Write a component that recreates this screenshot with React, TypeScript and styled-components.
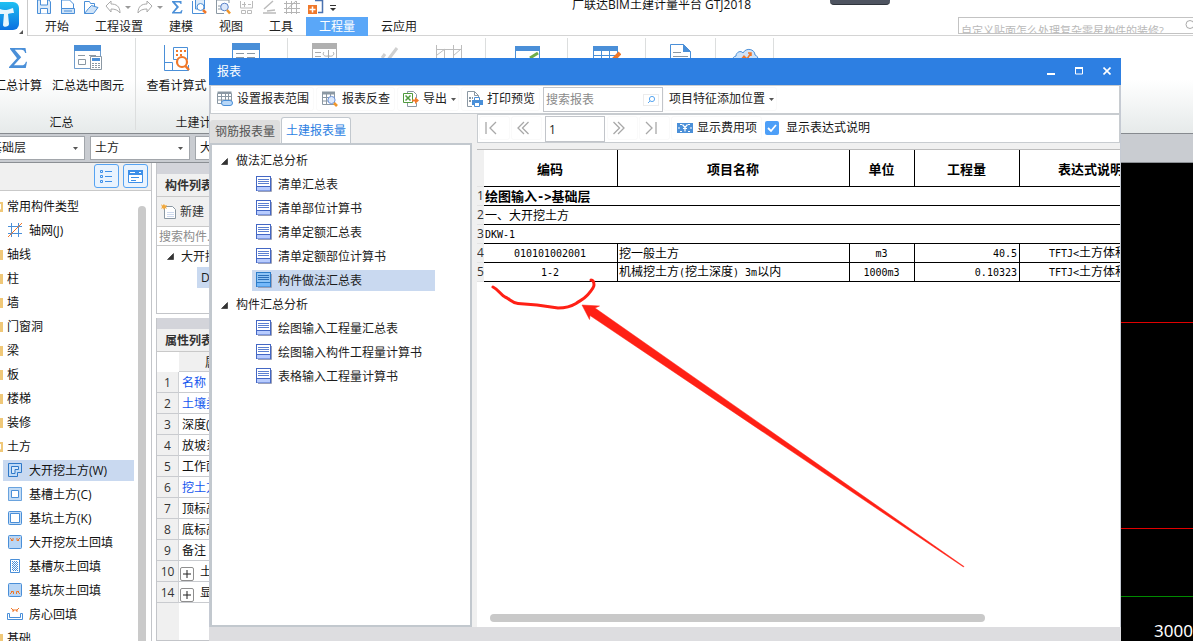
import React from "react";
import styled, { createGlobalStyle, css } from "styled-components";

const Global = createGlobalStyle`
  *, *::before, *::after { box-sizing: border-box; }
  html, body { margin: 0; height: 100%; background: #fff; overflow: hidden; }
  body, button, input, select {
    font-family: "Open Sans", "Noto Sans CJK SC", sans-serif;
    font-size: 12px;
    line-height: 16px;
    color: #1c1c1c;
  }
  button { border: 0; padding: 0; background: none; white-space: nowrap; }
  ul { list-style: none; margin: 0; padding: 0; }
  #root { height: 100%; }
`;

const Page = styled.div`
  position: relative;
  display: flex;
  flex-direction: column;
  height: 100vh;
  overflow: hidden;
`;

/* ---------- application header ---------- */

const Header = styled.header`
  display: flex;
  height: 36px;
  flex: none;
`;
const LogoCell = styled.div`
  width: 28px;
  flex: none;
  border-right: 1px solid #c9c9c9;
`;
const HeaderMain = styled.div`
  flex: 1;
  min-width: 0;
  display: flex;
  flex-direction: column;
  border-bottom: 1px solid #d4d4d4;
`;
const QuickBar = styled.div`
  display: flex;
  align-items: flex-start;
  height: 17px;
  padding-left: 8px;
  overflow: hidden;
`;
const QuickButton = styled.button<{ $w?: number }>`
  display: block;
  flex: none;
  width: ${(p) => p.$w ?? 23}px;
  height: 17px;
  svg { display: block; margin-top: -4px; }
`;
const AppTitle = styled.div`
  margin-left: 234px;
  margin-top: -4px;
  line-height: 18px;
  white-space: nowrap;
  color: #111;
`;
const Recorder = styled.div`
  width: 60px;
  height: 5px;
  margin-left: 79px;
  flex: none;
  border-radius: 0 0 4px 4px;
  background: #4e5460;
  border-bottom: 1px solid #2f343c;
`;
const MenuRow = styled.div`
  display: flex;
  justify-content: space-between;
  height: 18px;
`;
const Tabs = styled.nav`
  display: flex;
  padding-left: 4px;
`;
const MenuTab = styled.button<{ $active?: boolean }>`
  height: 19px;
  padding: 0 13px;
  color: ${(p) => (p.$active ? "#fff" : "#222")};
  background: ${(p) => (p.$active ? "#5aa7f8" : "transparent")};
`;
const HelpSearch = styled.label`
  display: flex;
  width: 235px;
  height: 17px;
  border: 1px solid #c3c3c3;
  border-right: 0;
  overflow: hidden;
  svg { flex: none; margin-top: 2px; }
  input {
    flex: 1;
    min-width: 0;
    height: 24px;
    border: 0;
    padding: 1px 0 0 2px;
    font-size: 11px;
    background: none;
    outline: none;
  }
  input::placeholder { color: #b9b9b9; opacity: 1; }
`;

/* ---------- ribbon ---------- */

const Ribbon = styled.div`
  display: flex;
  flex: none;
  height: 98px;
  padding-top: 2px;
  margin-left: -12px;
  border-bottom: 1px solid #868a8f;
  background: linear-gradient(#fff 45%, #e6eaea);
`;
const Group = styled.section<{ $w: number }>`
  display: flex;
  flex-direction: column;
  flex: none;
  width: ${(p) => p.$w}px;
  height: 92px;
  border-right: 1px solid #dcdede;
`;
const GroupButtons = styled.div<{ $start?: boolean }>`
  display: flex;
  justify-content: ${(p) => (p.$start ? "flex-start" : "center")};
  flex: 1;
`;
const RibbonButton = styled.button<{ $w: number }>`
  display: flex;
  flex-direction: column;
  align-items: center;
  width: ${(p) => p.$w}px;
  padding-top: 5px;
  gap: 7px;
  color: #111;
`;
const GroupCaption = styled.div`
  height: 15px;
  text-align: center;
`;

/* ---------- floor / type selectors ---------- */

const SelectBar = styled.div`
  display: flex;
  align-items: center;
  gap: 5px;
  flex: none;
  height: 29px;
  margin-left: -16px;
  padding-left: 1px;
  background: #c9ccd1;
  border-bottom: 1px solid #8b8f94;
`;
const SelectBox = styled.div`
  position: relative;
  width: 100px;
  height: 24px;
  select {
    appearance: none;
    width: 100%;
    height: 100%;
    padding: 0 4px;
    border: 1px solid #a2a6ab;
    border-radius: 0;
    background: #fff;
  }
  svg { position: absolute; right: 7px; top: 11px; }
`;

/* ---------- workspace ---------- */

const Workspace = styled.main`
  display: flex;
  flex: 1;
  min-height: 0;
`;
const Palette = styled.aside`
  display: flex;
  flex-direction: column;
  flex: none;
  width: 152px;
  border-right: 1px solid #c3c5c9;
  overflow: hidden;
`;
const PaletteTools = styled.div`
  display: flex;
  justify-content: flex-end;
  gap: 4px;
  flex: none;
  height: 28px;
  padding: 1px 3px 0 0;
  background: #f0f0f0;
  border-bottom: 1px solid #c9c9c9;
`;
const PaletteTool = styled.button`
  display: grid;
  place-items: center;
  width: 25px;
  height: 24px;
  border: 1px solid #56a3f2;
  border-radius: 3px;
  background: #e9f3fe;
`;
const PaletteBody = styled.div`
  display: flex;
  justify-content: space-between;
  flex: 1;
  min-height: 0;
  padding: 3px 5px 0 0;
`;
const PaletteTree = styled.ul`
  width: 146px;
  margin-left: -12px;
`;
const PaletteRow = styled.li`
  height: 24px;
  padding-top: 2px;
`;
const PaletteItem = styled.button<{ $child?: boolean; $on?: boolean }>`
  display: flex;
  align-items: flex-start;
  height: 21px;
  padding-top: 2px;
  line-height: 18px;
  gap: ${(p) => (p.$child ? 6 : 4)}px;
  ${(p) =>
    p.$child &&
    css`
      width: 131px;
      margin-left: 15px;
      padding-left: 4px;
    `}
  background: ${(p) => (p.$on ? "#c9d9f0" : "transparent")};
  color: #111;
`;
const VThumb = styled.div`
  width: 8px;
  margin-top: 12px;
  border-radius: 4px 4px 0 0;
  background: #cacaca;
`;
const Docks = styled.div`
  display: flex;
  flex-direction: column;
  gap: 4px;
  flex: none;
  width: 260px;
  margin-left: 4px;
`;
const Dock = styled.section<{ $h?: number }>`
  display: flex;
  flex-direction: column;
  ${(p) => (p.$h ? `height: ${p.$h}px;` : "flex: 1;")}
  border: 1px solid #c3c5c9;
  border-top: 0;
`;
const DockGrip = styled.div`
  height: 11px;
  flex: none;
  background: #d3d4da;
`;
const DockTitle = styled.h2`
  margin: 0;
  height: 23px;
  flex: none;
  padding-left: 8px;
  font-size: 12px;
  line-height: 23px;
  color: #333;
  background: #f0f0f0;
  border-bottom: 1px solid #c9c9c9;
`;
const DockTools = styled.div`
  display: flex;
  height: 30px;
  flex: none;
  padding-left: 4px;
  background: #f0f0f0;
  border-bottom: 1px solid #c9c9c9;
  button { display: flex; align-items: center; gap: 3px; color: #333; }
`;
const DockSearch = styled.input`
  height: 19px;
  flex: none;
  padding: 0 2px;
  border: 0;
  border-bottom: 1px solid #c9c9c9;
  outline: none;
  &::placeholder { color: #8c8c8c; opacity: 1; }
`;
const DockGroup = styled.div`
  display: flex;
  align-items: center;
  gap: 7px;
  height: 21px;
  padding-left: 10px;
`;
const DockLeaf = styled.div`
  height: 21px;
  margin-left: 40px;
  padding-left: 4px;
  line-height: 21px;
  background: #c9d9f0;
`;
const PropTable = styled.table`
  border-collapse: separate;
  border-spacing: 0;
  width: 100%;
  table-layout: fixed;
  th, td {
    height: 21px;
    padding: 2px 0 0;
    font-weight: 400;
    border-bottom: 1px solid #c9cbcf;
    white-space: nowrap;
  }
  thead th { height: 20px; background: #f0f0f0; }
  thead th:first-child { background: #fff; border-bottom-color: #fff; }
  tbody th {
    background: #f0f0f0;
    border-right: 1px solid #d0d2d5;
    color: #333;
  }
  td { padding-left: 3px; }
`;
const PropName = styled.td<{ $key?: boolean }>`
  color: ${(p) => (p.$key ? "#1356ee" : "#111")};
`;
const Expander = styled.button`
  display: inline-grid;
  place-items: center;
  width: 14px;
  height: 14px;
  margin-right: 6px;
  margin-left: -2px;
  vertical-align: -2px;
  border: 1px solid #8e8e8e;
  border-radius: 2px;
`;
const PropFill = styled.div`
  flex: 1;
  width: 22px;
  background: #f0f0f0;
`;
const Canvas = styled.div`
  position: relative;
  flex: 1;
  min-width: 0;
  background: #000;
  svg { display: block; width: 100%; height: 100%; }
`;
const DimText = styled.span`
  position: absolute;
  right: 0;
  bottom: 0;
  font-family: "Noto Sans", sans-serif;
  font-size: 17px;
  line-height: 20px;
  color: #fff;
`;

/* ---------- report window ---------- */

const Dialog = styled.section`
  position: absolute;
  top: 58px;
  left: 209px;
  right: 72px;
  bottom: 0;
  display: flex;
  flex-direction: column;
  background: #f0f0f0;
  overflow: hidden;
`;
const TitleBar = styled.div`
  display: flex;
  justify-content: space-between;
  flex: none;
  height: 27px;
  padding-left: 8px;
  background: #2d7fe2;
  color: #fff;
  line-height: 27px;
  h1 { margin: 0; font-size: 12px; line-height: 27px; font-weight: 400; }
`;
const WindowButtons = styled.div`
  display: flex;
  button { display: grid; place-items: center; width: 28px; height: 26px; }
`;
const DialogBody = styled.div`
  display: flex;
  flex-direction: column;
  flex: 1;
  min-height: 0;
  border: solid #c5cad3;
  border-width: 0 1px;
`;
const barFace = css`
  display: flex;
  align-items: flex-start;
  flex: none;
  height: 29px;
  padding-top: 1px;
  background: #fff;
  border: 1px solid #c8ccd0;
`;
const DialogTools = styled.div`
  ${barFace}
  gap: 2px;
`;
const ToolButton = styled.button<{ $drop?: boolean }>`
  display: flex;
  align-items: center;
  gap: 4px;
  height: 24px;
  padding: 0 ${(p) => (p.$drop ? 3 : 5)}px 0 6px;
  border-radius: 3px;
  box-shadow: inset 0 0 0 1px #fafafa;
  color: #222;
`;
const ReportSearch = styled.label`
  display: flex;
  align-items: center;
  width: 120px;
  height: 25px;
  margin: 0 -2px 0 1px;
  padding-right: 3px;
  border: 1px solid #c2c5ca;
  input {
    flex: 1;
    min-width: 0;
    padding: 0 2px;
    border: 0;
    outline: none;
    background: none;
  }
  input::placeholder { color: #8a8a8a; opacity: 1; }
`;
const SearchKey = styled.button`
  display: grid;
  place-items: center;
  width: 16px;
  height: 12px;
  border: 1px solid #ececec;
`;
const Split = styled.div`
  display: flex;
  gap: 5px;
  flex: 1;
  min-height: 0;
`;
const LeftPane = styled.div`
  display: flex;
  flex-direction: column;
  flex: none;
  width: 262px;
`;
const ReportTabs = styled.div`
  display: flex;
  align-items: flex-end;
  gap: 1px;
  height: 29px;
  flex: none;
`;
const ReportTab = styled.button<{ $active?: boolean }>`
  height: ${(p) => (p.$active ? 26 : 23)}px;
  width: 70px;
  border: 1px solid ${(p) => (p.$active ? "#c2c8ce" : "#dedede")};
  border-bottom: 0;
  border-radius: 3px 3px 0 0;
  background: ${(p) => (p.$active ? "#fff" : "#dedede")};
  color: ${(p) => (p.$active ? "#2d7fe2" : "#555")};
`;
const TreeBox = styled.ul`
  flex: 1;
  min-height: 0;
  padding: 3px 0;
  border: 2px solid #c2c8ce;
  background: #fff;
`;
const TreeGroup = styled.li`
  > button {
    display: flex;
    align-items: center;
    gap: 8px;
    height: 24px;
    padding: 2px 0 0 9px;
  }
`;
const TreeLeaf = styled.li`
  height: 24px;
  padding: 2px 0 0 40px;
`;
const TreeLeafButton = styled.button<{ $on?: boolean }>`
  display: flex;
  align-items: flex-start;
  gap: 6px;
  width: 183px;
  height: 21px;
  padding: 2px 0 0 4px;
  line-height: 18px;
  background: ${(p) => (p.$on ? "#c9d9f0" : "transparent")};
`;
const RightPane = styled.div`
  display: flex;
  flex-direction: column;
  flex: 1;
  min-width: 0;
`;
const PagerBar = styled.div`
  ${barFace}
  margin-bottom: 6px;
  gap: 1px;
  padding-left: 1px;
`;
const PagerButton = styled.button`
  display: grid;
  place-items: center;
  width: 31px;
  height: 24px;
  padding-right: 7px;
  border-radius: 3px;
  box-shadow: inset 0 0 0 1px #fafafa;
`;
const PageInput = styled.input`
  width: 60px;
  height: 26px;
  margin: 0 1px 0 2px;
  padding: 0 3px;
  border: 1px solid #c2c5ca;
  outline: none;
`;
const CheckLabel = styled.label`
  display: flex;
  align-items: center;
  gap: 7px;
  height: 24px;
  padding-left: 2px;
  color: #111;
  input {
    appearance: none;
    width: 14px;
    height: 14px;
    margin: 0;
    border-radius: 2px;
    background: #4d9ff8;
  }
  span { display: grid; }
  span > * { grid-area: 1 / 1; }
  svg { pointer-events: none; }
`;
const Sheet = styled.div`
  display: flex;
  flex-direction: column;
  justify-content: space-between;
  flex: 1;
  min-height: 0;
  padding-bottom: 5px;
  overflow: hidden;
  background: #fff;
  border-top: 1px solid #bcbcbc;
`;
const HThumb = styled.div`
  height: 8px;
  margin-left: 13px;
  width: 77%;
  border-radius: 4px;
  background: #c9c9c9;
`;
const ReportTable = styled.table`
  width: 686px;
  table-layout: fixed;
  border-collapse: separate;
  border-spacing: 0;
  color: #000;
  th, td {
    height: 19px;
    padding: 1px 2px 0 1px;
    line-height: 16px;
    border-bottom: 1px solid #000;
    white-space: nowrap;
  }
  thead th {
    height: 37px;
    font-size: 13px;
    font-weight: 700;
    border-right: 1px solid #000;
  }
  thead th:first-child, tbody th {
    padding: 0;
    font-weight: 400;
    color: #333;
    background: #f0f0f0;
    border-bottom: 1px solid #e2e2e2;
    border-right: 0;
  }
`;
const Cell = styled.td<{ $align?: "center" | "right"; $line?: boolean; $bold?: boolean }>`
  text-align: ${(p) => p.$align ?? "left"};
  border-right: ${(p) => (p.$line ? "1px solid #000" : "0")};
  ${(p) =>
    p.$bold &&
    css`
      font-size: 13px;
      font-weight: 700;
    `}
`;
const Half = styled.span<{ $bold?: boolean }>`
  font-family: "DejaVu Sans Mono", monospace;
  font-size: ${(p) => (p.$bold ? 12 : 10)}px;
  white-space: pre;
`;
const StatusBar = styled.div`
  height: 14px;
  flex: none;
  background: #dddde0;
`;
const Markup = styled.svg`
  position: absolute;
  left: 0;
  top: 0;
  pointer-events: none;
`;

/* Latin runs in the report are set half the width of a Chinese character. */
function Mixed({ text, bold }: { text: string; bold?: boolean }) {
  return (
    <>
      {text
        .split(/([\x20-\x7e]+)/)
        .filter(Boolean)
        .map((part, i) =>
          /^[\x20-\x7e]/.test(part) ? (
            <Half key={i} $bold={bold}>{part}</Half>
          ) : (
            <React.Fragment key={i}>{part}</React.Fragment>
          )
        )}
    </>
  );
}

/* ---------- icons ---------- */

const B = "#4a8fd8";
const G = "#8b98a3";
const O = "#f0782a";

function Svg({ w = 16, h = 16, children }: { w?: number; h?: number; children: React.ReactNode }) {
  return (
    <svg width={w} height={h} viewBox={`0 0 ${w} ${h}`} fill="none" aria-hidden="true">
      {children}
    </svg>
  );
}
const Caret = () => (
  <Svg w={5} h={3}><path d="M0 0h5L2.5 3z" fill="#555" /></Svg>
);
const Twist = () => (
  <Svg w={7} h={7}><path d="M6.5 0.5v6h-6z" fill="#333" stroke="#222" strokeWidth="0.6" /></Svg>
);
const Sigma = ({ w, h }: { w: number; h: number }) => (
  <svg width={w} height={h} viewBox="0 0 18 20" fill="none" aria-hidden="true">
    <path d="M1 0h15.500l.8 5h-1.200c-.6-2.300-1.600-3.300-4-3.300H5.800l6.400 7.600-7.300 8h7.600c2.400 0 3.500-1 4.400-3.600h1.100l-1.200 6.300H0v-1l8-8.700L1 1.100z" fill={B} />
  </svg>
);
const DocIcon = ({ on }: { on?: boolean }) => (
  <Svg>
    <path d="M15.500 2v13.500H2" stroke="#9aa0b8" />
    <rect x="0.500" y="0.500" width="14" height="14" fill={on ? "#8fc4f5" : "#fff"} stroke={on ? "#2c7cc8" : "#4467c4"} />
    <path d="M2 3.500h11M2 5.500h11M2 7.500h11" stroke={on ? "#2c6fb8" : "#5b7fd0"} />
    <path d="M1 10.500h13v4H1z" fill={on ? "#74b8fa" : "#b8ccff"} />
    <path d="M1 10.500h13" stroke={on ? "#2c7cc8" : "#4467c4"} />
  </Svg>
);
const Folder = ({ open }: { open?: boolean }) => (
  <Svg w={15} h={16}>
    <path d="M0 2h7l1 2h7v10H0z" fill="#f0c878" />
    {open && <path d="M9 6h4v6l-2-3z" fill="#fff" />}
  </Svg>
);

const quickIcons: Record<string, React.ReactNode> = {
  save: (<><path d="M1.500 1v13.500h13V3l-1.500-2z" fill="#dcebfa" stroke={B} /><path d="M4.500 1v5h7V1M4.500 14.500v-5h7v5" fill="#fff" stroke={B} /></>),
  create: (<><path d="M1.500 9V1h8l4 4v9.500h-12z" fill="#fff" stroke={B} /><path d="M1.500 9.500h13v5h-13z" fill="#cfe3f8" stroke={B} /><path d="M4 12h8" stroke={B} /></>),
  open: (<><path d="M1.500 14.500V2.500h5l1 2h4v3" stroke={B} /><path d="M1.500 14.500l4-5 3-3 6.500 2-4.500 6z" fill="#cfe3f8" stroke={B} /></>),
  undo: <path d="M1 6l5-5v3c5 0 9 2 9 9-2-3-5-4-9-4v3z" stroke="#aaa" transform="translate(0 1)" />,
  redo: <path d="M15 6l-5-5v3c-5 0-9 2-9 9 2-3 5-4 9-4v3z" stroke="#aaa" transform="translate(0 1)" />,
  inspect: (<><path d="M1.500 2v12.500h12" stroke={B} /><path d="M4.500 1v9h9V1" fill="#dcebfa" stroke={B} /><circle cx="9.500" cy="8" r="3.500" fill="#fff" stroke={B} /><path d="M12 11l3 3" stroke={O} strokeWidth="2.500" /></>),
  review: (<><path d="M14 4V1H1.500v13.500H9" stroke={G} /><path d="M3 7h3M3 10h3" stroke={G} /><circle cx="9.500" cy="8" r="3.800" fill="#dce8fb" stroke="#5a82c8" /><path d="M12 11l3 3.500" stroke="#f0962a" strokeWidth="2.500" /></>),
  sum: (<><path d="M1.500 2v7h12V2M3 5.500h4M5.500 3v5M9 5.500h3" stroke="#bbb" /><path d="M2.500 11.500h4v3h-4zM8.500 11.500h4v3h-4z" stroke="#bbb" /></>),
  edit: (<path d="M2 10L11 2M1 14h13M5 12l8-1" stroke="#bbb" strokeWidth="1.500" />),
  grid: (<path d="M2.500 2v13M7.500 2v13M12.500 2v13M0 4.500h16M0 9.500h16M0 13.500h16M2 11l10-9" stroke="#b5b5b5" />),
  add: (<><path d="M7 1.500h7.500v12H10" stroke="#4a72b0" strokeWidth="1.500" /><rect x="0" y="6" width="9" height="9" fill={O} /><path d="M4.500 7.500v6M1.500 10.500h6" stroke="#fff" strokeWidth="1.500" /></>),
};

const quick: [string, string, number][] = [
  ["save", "保存", 24], ["create", "新建", 23], ["open", "打开", 22], ["undo", "撤销", 20],
  ["caret", "撤销列表", 12], ["redo", "恢复", 20], ["caret", "恢复列表", 14], ["sigma", "汇总计算", 20],
  ["inspect", "查看", 24], ["review", "检查", 24], ["sum", "报表", 23], ["edit", "编辑", 22],
  ["grid", "轴网", 24], ["add", "添加", 22], ["more", "更多", 8],
];

const QuickGlyph = ({ name }: { name: string }) => {
  if (name === "sigma") return <Svg w={12} h={16}><path d="M1 2h9.500v3h-1c-.3-1-.8-1.500-2-1.500H4L8 8l-4.500 5H8c1.300 0 2-.5 2.500-2h1l-.8 3.500H1v-1L5.500 8 1 3z" fill={B} /></Svg>;
  if (name === "caret") return <Svg w={6} h={16}><path d="M0 7h6l-3 3z" fill="#999" /></Svg>;
  if (name === "more") return <Svg w={6} h={16}><path d="M0 6.500h6" stroke="#333" /><path d="M0 9h6l-3 3z" fill="#333" /></Svg>;
  return <Svg>{quickIcons[name]}</Svg>;
};

const BigWindow = ({ body }: { body: React.ReactNode }) => (
  <Svg w={28} h={28}>{body}</Svg>
);

const bigIcons = {
  select: (<><path d="M.5 2.500h26v23H.5z" fill="#fff" stroke="#6f9ccc" /><path d="M0 2h27v6H0z" fill={B} /><path d="M4 12.500h7M15 12.500h7" stroke={G} /><path d="M4.500 16.500h7v5h-7z" stroke={G} /><path d="M16.500 13.500h11v13h-11z" fill="#fff" stroke={G} /><path d="M18 15h8v3h-8z" fill={B} /><path d="M18 20.500h8M18 22.500h8M18 24.500h8" stroke={G} strokeDasharray="2 1" /></>),
  formula: (<><path d="M1.500 2v25.500h24V22M1.500 19.500h8v8" stroke={B} /><path d="M10.500 4.500h14v12h-14z" fill="#fff" stroke={B} /><path d="M13 8h10M13 12h6" stroke={O} strokeWidth="2" strokeDasharray="2 2" /><circle cx="19" cy="19" r="5" fill="#fff" stroke={O} strokeWidth="2.200" /><path d="M22.500 23l3.500 4" stroke={O} strokeWidth="2.500" /></>),
  report: (<><path d="M.5.5h27v27H.5z" fill="#fff" stroke={B} /><path d="M0 0h28v7H0z" fill={B} /><path d="M4 10.500h8M15 10.500h8M4 14.500h8M15 14.500h8" stroke={G} /></>),
  cloudSum: (<><path d="M1.500.5h24v24h-24z" stroke="#b0b0b0" /><path d="M1 0h25v6H1z" fill="#b0b0b0" /><path d="M4 9.500h6M4 13.500h6M17.500 7v10" stroke="#aaa" /><path d="M13 9c-2 2 0 5 4 4M22 9c2 2 0 5-4 4" stroke="#aaa" /></>),
  pen: <path d="M8 26L24 5M9 15l3-4" stroke="#d0d0d0" strokeWidth="3" />,
  axes: <path d="M1.500 2v25M9.500 6v20M18.500 2v25M26.500 2v25M1 6.500h26M1 15.500h26M2 12l8-6M18 13l8-7" stroke="#bdbdbd" />,
  check: (<><path d="M2.500 3.500h24v24h-24z" fill="#fff" stroke={B} /><path d="M2 3h25v5H2z" fill={B} /><path d="M17 15l8-5" stroke="#6fae4a" strokeWidth="3" /></>),
  table: (<><path d="M.5 3.500h24v24H.5zM0 12.500h24M8.500 8v18M16.500 8v18" fill="#fff" stroke={B} /><path d="M0 3h25v5H0z" fill={B} /><path d="M27 10L20 17" stroke={O} strokeWidth="4" /></>),
  doc: (<><path d="M3.500 1.500h13l7 7v18h-20z" fill="#fff" stroke={B} /><path d="M16 1l8 8h-8z" fill={B} /><path d="M6 9.500h8M6 13.500h15" stroke={G} /><path d="M16 16h7" stroke={O} strokeWidth="2" /></>),
  cloud: (<><path d="M5 22c-5-1-5-8 0-9 0-4 5-6 7-3 3-6 12-4 12 2 4 1 4 8 0 10z" fill="#cfe3f8" stroke={B} /><path d="M9 18l4-5 3 3 4-6M17 10h3v3" stroke={O} strokeWidth="1.500" /></>),
};

const toolIcons = {
  range: (<><path d="M.5 2.500h14v10H.5zM.5 5.500h14M.5 9h14M4.500 2v10M8.500 2v10M11.500 2v10" stroke={G} /><path d="M.5 1.500h14" stroke={G} strokeWidth="2" /><rect x="4.500" y="9.500" width="11" height="5" rx="2.500" fill="#b9d8f8" stroke={B} /></>),
  trace: (<><path d="M.5 2.500h12v11H.5zM.5 6.500h12M.5 10h8M4.500 2v11M8.500 2v4" stroke={G} /><path d="M0 2h13" stroke={G} strokeWidth="3" /><circle cx="9.500" cy="9" r="3.600" fill="#dce8fb" stroke="#6c93d8" /><path d="M12 12l3 3" stroke="#f0962a" strokeWidth="2.600" /></>),
  exportIcon: (<><path d="M4.500 3V.5h6l3 3V7M4.500 12v3.500h9V12" stroke={G} /><path d="M.5 2.500h9v9h-9z" fill="#fff" stroke="#4f9a3e" /><path d="M2.500 4.500l5 5M7.500 4.500l-5 5" stroke="#4f9a3e" strokeWidth="1.500" /><path d="M9 8.500h3V6l4 3.500-4 3.500v-2.500H9z" fill={O} /></>),
  print: (<><path d="M5 15.500H.5V.5h7l4 4V7M7.500.5v4h4" stroke={G} /><path d="M2 7h2M2 10h2M5 7h1" stroke={G} strokeWidth="2" /><path d="M7.500 9V6.500h5V9" stroke={B} /><path d="M5 9h11v5H5z" fill={B} /><path d="M7.500 11.500h5v4h-5z" fill="#fff" stroke={B} /></>),
  fee: (<><path d="M0 3h16v10H0z" fill={B} /><path d="M3 4.500h2M11 4.500h2M3 11.500h2M11 11.500h2M1 8h2M13 8h2" stroke="#fff" /><path d="M5.500 4.500L8 7.500l2.500-3M8 7.500v4M6 8.500h4" stroke="#fff" strokeWidth="1.200" /></>),
};

const paletteIcons = {
  axis: (<><path d="M4.500 1v14M11.500 1v14M1 4.500h14M1 11.500h14" stroke={B} /><path d="M1 15L15 1" stroke={O} /></>),
  big: (<><path d="M1.500 1.500h13v9h-4v4h-9z" fill="#bfdaf7" stroke="#2f78c8" /><path d="M4.500 4.500h7v3h-3.500v4H4.500z" fill="#d6e8fb" stroke="#2f78c8" /></>),
  trench: (<><path d="M1.500 1.500h13v13h-13z" fill="#c3dcf6" stroke="#6aa3de" /><path d="M4.500 4.500h7v7h-7z" fill="#fff" stroke={B} /></>),
  pit: (<><rect x="1.500" y="1.500" width="13" height="13" rx="1" fill="#c3dcf6" stroke={B} /><path d="M3.500 3.500h9v9h-9z" fill="#fff" stroke={B} /></>),
  fillBig: (<><rect x="1.500" y="1.500" width="13" height="13" rx="1" fill="#b9d6f5" stroke={B} /><path d="M3 4l3 3M13 4l-3 3M6 4v2.500H4M10 4v2.500h2" stroke={O} /></>),
  fillTrench: (<><path d="M3.500 1.500h9v13h-9z" fill="#fff" stroke={B} /><path d="M5 3.500h6M5 5.500h6M5 7.500h6M5 9.500h6M5 11.500h6" stroke={B} strokeDasharray="1 1" /><path d="M6 4.500h6M6 6.500h6M6 8.500h6M6 10.500h6M6 12.500h6" stroke={B} strokeDasharray="1 1" /></>),
  fillPit: (<><rect x="1.500" y="1.500" width="13" height="13" rx="1" fill="#b9d6f5" stroke={B} /><path d="M3 12l3-3M13 12l-3-3M4 9.500h2.500V12M12 9.500H9.500V12" stroke={O} /></>),
  room: (<><path d="M.5 7.500v6h15v-6h-2v4h-11v-4z" fill="#fff" stroke={B} /><path d="M4 2l3 3M12 2L9 5M7 3v2H5M9 3v2h2" stroke={O} /></>),
};

type PaletteEntry = { text: string; icon?: keyof typeof paletteIcons; open?: boolean; on?: boolean };
const palette: PaletteEntry[] = [
  { text: "常用构件类型", open: true },
  { text: "轴网(J)", icon: "axis" },
  { text: "轴线" }, { text: "柱" }, { text: "墙" }, { text: "门窗洞" },
  { text: "梁" }, { text: "板" }, { text: "楼梯" }, { text: "装修" },
  { text: "土方", open: true },
  { text: "大开挖土方(W)", icon: "big", on: true },
  { text: "基槽土方(C)", icon: "trench" },
  { text: "基坑土方(K)", icon: "pit" },
  { text: "大开挖灰土回填", icon: "fillBig" },
  { text: "基槽灰土回填", icon: "fillTrench" },
  { text: "基坑灰土回填", icon: "fillPit" },
  { text: "房心回填", icon: "room" },
  { text: "基础" },
];

const props: { n: number; text: string; key?: boolean; group?: boolean }[] = [
  { n: 1, text: "名称", key: true },
  { n: 2, text: "土壤类别", key: true },
  { n: 3, text: "深度(mm)" },
  { n: 4, text: "放坡系数" },
  { n: 5, text: "工作面宽" },
  { n: 6, text: "挖土方式", key: true },
  { n: 7, text: "顶标高(m)" },
  { n: 8, text: "底标高(m)" },
  { n: 9, text: "备注" },
  { n: 10, text: "土建业务属性", group: true },
  { n: 14, text: "显示样式", group: true },
];

const reports = [
  { title: "做法汇总分析", items: ["清单汇总表", "清单部位计算书", "清单定额汇总表", "清单定额部位计算书", "构件做法汇总表"] },
  { title: "构件汇总分析", items: ["绘图输入工程量汇总表", "绘图输入构件工程量计算书", "表格输入工程量计算书"] },
];

const menu = ["开始", "工程设置", "建模", "视图", "工具", "工程量", "云应用"];

const moreGroups: { w: number; bw: number; items: { label: string; icon: React.ReactNode }[] }[] = [
  { w: 198, bw: 62, items: [{ label: "云汇总", icon: bigIcons.cloudSum }, { label: "编辑", icon: bigIcons.pen }, { label: "轴网", icon: bigIcons.axes }] },
  { w: 82, bw: 62, items: [{ label: "云检查", icon: bigIcons.check }] },
  { w: 78, bw: 62, items: [{ label: "表格算量", icon: bigIcons.table }] },
  { w: 70, bw: 62, items: [{ label: "查看报表", icon: bigIcons.doc }] },
  { w: 58, bw: 56, items: [{ label: "云指标", icon: bigIcons.cloud }] },
];

function AppHeader() {
  return (
    <Header>
      <LogoCell>
        <svg width="24" height="35" viewBox="0 0 24 35" fill="none" aria-hidden="true">
          <defs>
            <linearGradient id="logo" x1="0" y1="0" x2="0" y2="1">
              <stop offset="0" stopColor="#1fc0f2" />
              <stop offset="1" stopColor="#0b6fe0" />
            </linearGradient>
          </defs>
          <rect x="-12" y="2" width="31" height="28" rx="6" fill="url(#logo)" />
          <path d="M0 9c4 2 8 1 13-1l1 5c-2 0-4 0-6 1l1 10c0 3-6 4-6 1l1-11H0z" fill="#e8f6fd" />
          <path d="M23 30v4h-4z" fill="#555" />
        </svg>
      </LogoCell>
      <HeaderMain>
        <QuickBar>
          {quick.map(([name, label, w], i) => (
            <QuickButton key={i} $w={w} aria-label={label}><QuickGlyph name={name} /></QuickButton>
          ))}
          <AppTitle>广联达BIM土建计量平台 GTJ2018</AppTitle>
          <Recorder />
        </QuickBar>
        <MenuRow>
          <Tabs>
            {menu.map((m) => <MenuTab key={m} $active={m === "工程量"}>{m}</MenuTab>)}
          </Tabs>
          <HelpSearch>
            <input aria-label="搜索帮助" placeholder="自定义贴面怎么处理复杂零星构件的装修?" />
            <Svg w={8} h={12}><circle cx="5" cy="4.500" r="4" stroke="#aaa" /><path d="M8 8l3 3" stroke="#aaa" /></Svg>
          </HelpSearch>
        </MenuRow>
      </HeaderMain>
    </Header>
  );
}

function AppRibbon() {
  return (
    <Ribbon>
      <Group $w={148}>
        <GroupButtons $start>
          <RibbonButton $w={60}><Svg w={28} h={28}><g transform="translate(5 5)"><Sigma w={18} h={20} /></g></Svg>汇总计算</RibbonButton>
          <RibbonButton $w={80}><BigWindow body={bigIcons.select} />汇总选中图元</RibbonButton>
        </GroupButtons>
        <GroupCaption>汇总</GroupCaption>
      </Group>
      <Group $w={152}>
        <GroupButtons>
          <RibbonButton $w={68}><BigWindow body={bigIcons.formula} />查看计算式</RibbonButton>
          <RibbonButton $w={70}><BigWindow body={bigIcons.report} />查看工程量</RibbonButton>
        </GroupButtons>
        <GroupCaption>土建计算结果</GroupCaption>
      </Group>
      {moreGroups.map((g, i) => (
        <Group key={i} $w={g.w}>
          <GroupButtons>
            {g.items.map((it) => (
              <RibbonButton key={it.label} $w={g.bw} aria-label={it.label}><BigWindow body={it.icon} /></RibbonButton>
            ))}
          </GroupButtons>
        </Group>
      ))}
    </Ribbon>
  );
}

function Selectors() {
  return (
    <SelectBar>
      {[["楼层", "基础层"], ["构件类型", "土方"], ["构件", "大开挖土方"]].map(([label, value]) => (
        <SelectBox key={label}>
          <select aria-label={label} defaultValue={value}><option>{value}</option></select>
          <Caret />
        </SelectBox>
      ))}
    </SelectBar>
  );
}

function PalettePanel() {
  return (
    <Palette>
      <PaletteTools>
        <PaletteTool aria-label="列表">
          <Svg w={15}><path d="M1.500 2.500h2v2h-2zM1.500 7.500h2v2h-2zM1.500 12.500h2v2h-2z" stroke="#3d8fe8" /><path d="M6 3.500h7M6 8.500h7M6 13.500h7" stroke="#3d8fe8" /></Svg>
        </PaletteTool>
        <PaletteTool aria-label="面板">
          <Svg w={15}><path d="M.5 2.500h14v12H.5z" fill="#fff" stroke="#3d8fe8" /><path d="M0 2h15v5H0z" fill="#3d8fe8" /><path d="M2 4.500h5M11 4.500h2" stroke="#fff" /><path d="M3 9.500h8M3 12.500h5" stroke="#3d8fe8" /></Svg>
        </PaletteTool>
      </PaletteTools>
      <PaletteBody>
        <PaletteTree>
          {palette.map((e) => (
            <PaletteRow key={e.text}>
              <PaletteItem $child={!!e.icon} $on={e.on}>
                {e.icon ? <Svg>{paletteIcons[e.icon]}</Svg> : <Folder open={e.open} />}
                {e.text}
              </PaletteItem>
            </PaletteRow>
          ))}
        </PaletteTree>
        <VThumb />
      </PaletteBody>
    </Palette>
  );
}

function DockPanels() {
  return (
    <Docks>
      <Dock $h={151}>
        <DockGrip />
        <DockTitle>构件列表</DockTitle>
        <DockTools>
          <button>
            <Svg>
              <path d="M3.500 2.500h8l3 3v9h-11z" fill="#fff" stroke={G} />
              <path d="M6 8.500h7M6 10.500h7M6 12.500h7" stroke="#cdd9ee" />
              <path d="M0 0l1.500 1.500L3 0l1 1.500L6 1 5 3l1 2-2-1-1 2-1-2-2 1 1-2z" fill="#f2a93c" />
            </Svg>
            新建
          </button>
        </DockTools>
        <DockSearch aria-label="搜索构件" placeholder="搜索构件..." />
        <DockGroup><Twist />大开挖土方</DockGroup>
        <DockLeaf>DKW-1</DockLeaf>
      </Dock>
      <Dock>
        <DockGrip />
        <DockTitle>属性列表</DockTitle>
        <PropTable>
          <colgroup><col style={{ width: 22 }} /><col style={{ width: 100 }} /><col /></colgroup>
          <thead><tr><th aria-label="序号" /><th scope="col">属性名称</th><th scope="col">属性值</th></tr></thead>
          <tbody>
            {props.map((p) => (
              <tr key={p.n}>
                <th scope="row">{p.n}</th>
                <PropName $key={p.key}>
                  {p.group && (
                    <Expander aria-label="展开"><Svg w={8} h={8}><path d="M0 4h8M4 0v8" stroke="#222" /></Svg></Expander>
                  )}
                  {p.text}
                </PropName>
                <td />
              </tr>
            ))}
          </tbody>
        </PropTable>
        <PropFill />
      </Dock>
    </Docks>
  );
}

function ReportTree() {
  return (
    <LeftPane>
      <ReportTabs>
        <ReportTab>钢筋报表量</ReportTab>
        <ReportTab $active>土建报表量</ReportTab>
      </ReportTabs>
      <TreeBox>
        {reports.map((g) => (
          <TreeGroup key={g.title}>
            <button><Twist />{g.title}</button>
            <ul>
              {g.items.map((t) => (
                <TreeLeaf key={t}>
                  <TreeLeafButton $on={t === "构件做法汇总表"}>
                    <DocIcon on={t === "构件做法汇总表"} />
                    {t}
                  </TreeLeafButton>
                </TreeLeaf>
              ))}
            </ul>
          </TreeGroup>
        ))}
      </TreeBox>
    </LeftPane>
  );
}

function Pager() {
  const s = { stroke: "#a8a8a8", strokeWidth: 1.3 };
  return (
    <PagerBar>
      <PagerButton aria-label="首页"><Svg w={12} h={14}><path d="M1 1v12M11 1L5 7l6 6" {...s} /></Svg></PagerButton>
      <PagerButton aria-label="上一页"><Svg w={12} h={14}><path d="M7 1L1 7l6 6M11.500 1l-6 6 6 6" {...s} /></Svg></PagerButton>
      <PageInput aria-label="页码" defaultValue="1" />
      <PagerButton aria-label="下一页"><Svg w={12} h={14}><path d="M5 1l6 6-6 6M.5 1l6 6-6 6" {...s} /></Svg></PagerButton>
      <PagerButton aria-label="末页"><Svg w={12} h={14}><path d="M11 1v12M1 1l6 6-6 6" {...s} /></Svg></PagerButton>
      <ToolButton><Svg>{toolIcons.fee}</Svg>显示费用项</ToolButton>
      <CheckLabel>
        <span>
          <input type="checkbox" defaultChecked />
          <Svg w={14} h={14}><path d="M3 7l3 3 5-6" stroke="#fff" strokeWidth="1.800" /></Svg>
        </span>
        显示表达式说明
      </CheckLabel>
    </PagerBar>
  );
}

function Report() {
  const rows = [
    ["010101002001", "挖一般土方", "m3", "40.5"],
    ["1-2", "机械挖土方(挖土深度) 3m以内", "1000m3", "0.10323"],
  ];
  return (
    <Sheet>
      <ReportTable>
        <colgroup>
          {[7, 134, 232, 65, 105, 143].map((w, i) => <col key={i} style={{ width: w }} />)}
        </colgroup>
        <thead>
          <tr>
            <th aria-label="行号" />
            {["编码", "项目名称", "单位", "工程量", "表达式说明"].map((h) => <th key={h} scope="col">{h}</th>)}
          </tr>
        </thead>
        <tbody>
          <tr><th scope="row">1</th><Cell colSpan={5} $bold><Mixed text="绘图输入->基础层" bold /></Cell></tr>
          <tr><th scope="row">2</th><Cell colSpan={5}>一、大开挖土方</Cell></tr>
          <tr><th scope="row">3</th><Cell colSpan={5}><Mixed text="DKW-1" /></Cell></tr>
          {rows.map((r, i) => (
            <tr key={i}>
              <th scope="row">{i + 4}</th>
              <Cell $align="center" $line><Mixed text={r[0]} /></Cell>
              <Cell $line><Mixed text={r[1]} /></Cell>
              <Cell $align="center" $line><Mixed text={r[2]} /></Cell>
              <Cell $align="right" $line><Mixed text={r[3]} /></Cell>
              <Cell $align="center"><Mixed text="TFTJ<土方体积>" /></Cell>
            </tr>
          ))}
        </tbody>
      </ReportTable>
      <HThumb />
    </Sheet>
  );
}

function ReportWindow() {
  return (
    <Dialog role="dialog" aria-label="报表">
      <TitleBar>
        <h1>报表</h1>
        <WindowButtons>
          <button aria-label="最小化"><Svg w={8} h={8}><path d="M0 6h8v2H0z" fill="#fff" /></Svg></button>
          <button aria-label="最大化"><Svg w={8} h={8}><path d="M.5 1.500h7v5.500h-7z" stroke="#fff" /><path d="M0 1h8" stroke="#fff" strokeWidth="2" /></Svg></button>
          <button aria-label="关闭"><Svg w={8} h={8}><path d="M0.500 0.500l7 7M7.500 0.500l-7 7" stroke="#fff" strokeWidth="1.600" /></Svg></button>
        </WindowButtons>
      </TitleBar>
      <DialogBody>
        <DialogTools>
          <ToolButton><Svg>{toolIcons.range}</Svg>设置报表范围</ToolButton>
          <ToolButton><Svg>{toolIcons.trace}</Svg>报表反查</ToolButton>
          <ToolButton $drop><Svg>{toolIcons.exportIcon}</Svg>导出<Caret /></ToolButton>
          <ToolButton><Svg>{toolIcons.print}</Svg>打印预览</ToolButton>
          <ReportSearch>
            <input aria-label="搜索报表" placeholder="搜索报表" />
            <SearchKey aria-label="搜索">
              <Svg w={9} h={9}><circle cx="5" cy="4" r="2.600" stroke="#5aa7f0" /><path d="M3 6L1 8" stroke="#5aa7f0" /></Svg>
            </SearchKey>
          </ReportSearch>
          <ToolButton $drop>项目特征添加位置<Caret /></ToolButton>
        </DialogTools>
        <Split>
          <ReportTree />
          <RightPane>
            <Pager />
            <Report />
          </RightPane>
        </Split>
      </DialogBody>
      <StatusBar />
      <Markup width="912" height="583" viewBox="209 58 912 583" fill="none" aria-hidden="true">
        <path
          d="M493 287C499 290 501 295 505 297C510 299 512 303 518 303.500L537 305L558 308C567 308 572 306 576 303.500C581 300 584 299 587 295.500C591 291 594 288 594 285C594 282 593 280 591 280"
          stroke="#ff2015" strokeWidth="3" strokeLinecap="round" strokeLinejoin="round"
        />
        <path d="M582 305L599.500 306L595 308L964 566.500L963.500 567L590 315.500L589.500 319.500Z" fill="#ff2015" stroke="#ff2015" strokeWidth="0.500" />
      </Markup>
    </Dialog>
  );
}

export default function App() {
  return (
    <>
      <Global />
      <Page>
        <AppHeader />
        <AppRibbon />
        <Selectors />
        <Workspace>
          <PalettePanel />
          <DockPanels />
          <Canvas>
            <svg aria-hidden="true">
              <path d="M0 159.500h4000M0 365.500h4000" stroke="#e00000" />
              <path d="M0 433.500h4000" stroke="#008a00" />
            </svg>
            <DimText>3000</DimText>
          </Canvas>
        </Workspace>
        <ReportWindow />
      </Page>
    </>
  );
}
